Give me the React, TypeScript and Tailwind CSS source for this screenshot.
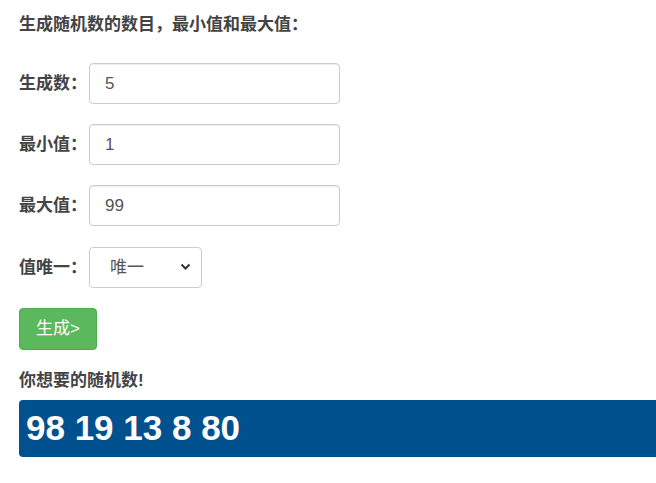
import { useState } from 'react'

const font = { fontFamily: '"Liberation Sans", "Noto Sans CJK SC", sans-serif' }

function Row({ label, children }: { label: string; children: React.ReactNode }) {
  return (
    <div className="flex h-[41px] items-center">
      <label className="w-[70px] text-[17px] font-bold text-[#444]">{label}</label>
      {children}
    </div>
  )
}

export default function App() {
  const [count, setCount] = useState('5')
  const [min, setMin] = useState('1')
  const [max, setMax] = useState('99')
  const [unique, setUnique] = useState('1')

  const inputCls =
    'h-[41px] w-[251px] rounded-[4px] border border-[#ccc] bg-white px-[15px] text-[17px] text-[#555] shadow-[inset_0_1px_1px_rgba(0,0,0,0.075)] focus:outline-none'

  return (
    <div className="h-[483px] w-[656px] overflow-hidden bg-white pl-[19px] pt-[13px]" style={font}>
      <div className="text-[17px] font-bold leading-[24px] text-[#444]">生成随机数的数目，最小值和最大值：</div>

      <div className="mt-[26px] flex flex-col gap-[20px]">
        <Row label="生成数：">
          <input className={inputCls} value={count} onChange={(e) => setCount(e.target.value)} />
        </Row>
        <Row label="最小值：">
          <input className={inputCls} value={min} onChange={(e) => setMin(e.target.value)} />
        </Row>
        <Row label="最大值：">
          <input className={inputCls} value={max} onChange={(e) => setMax(e.target.value)} />
        </Row>
        <div className="mt-[1px]">
          <Row label="值唯一：">
            <div className="relative h-[41px] w-[113px]">
              <select
                value={unique}
                onChange={(e) => setUnique(e.target.value)}
                className="h-full w-full appearance-none rounded-[4px] border border-[#ccc] bg-white pl-[20px] text-[17px] text-[#555] focus:outline-none"
              >
                <option value="1">唯一</option>
                <option value="0">不唯一</option>
              </select>
              <svg
                className="pointer-events-none absolute right-[11px] top-[16px]"
                width="11"
                height="8"
                viewBox="0 0 11 8"
                fill="none"
                stroke="#333"
                strokeWidth="2"
              >
                <path d="M1.5 1.5 5.5 5.5 9.5 1.5" />
              </svg>
            </div>
          </Row>
        </div>
      </div>

      <button className="mt-[20px] h-[42px] w-[78px] rounded-[4px] border border-[#4cae4c] bg-[#5cb85c] text-[17px] text-white">
        生成&gt;
      </button>

      <div className="mt-[19px] text-[17px] font-bold leading-[24px] text-[#444]">你想要的随机数!</div>

      <div className="mt-[7px] flex h-[57px] w-[660px] items-center rounded-l-[4px] bg-[#01518f] pl-[7px]">
        <span className="text-[35px] font-bold text-white">98 19 13 8 80</span>
      </div>
    </div>
  )
}
